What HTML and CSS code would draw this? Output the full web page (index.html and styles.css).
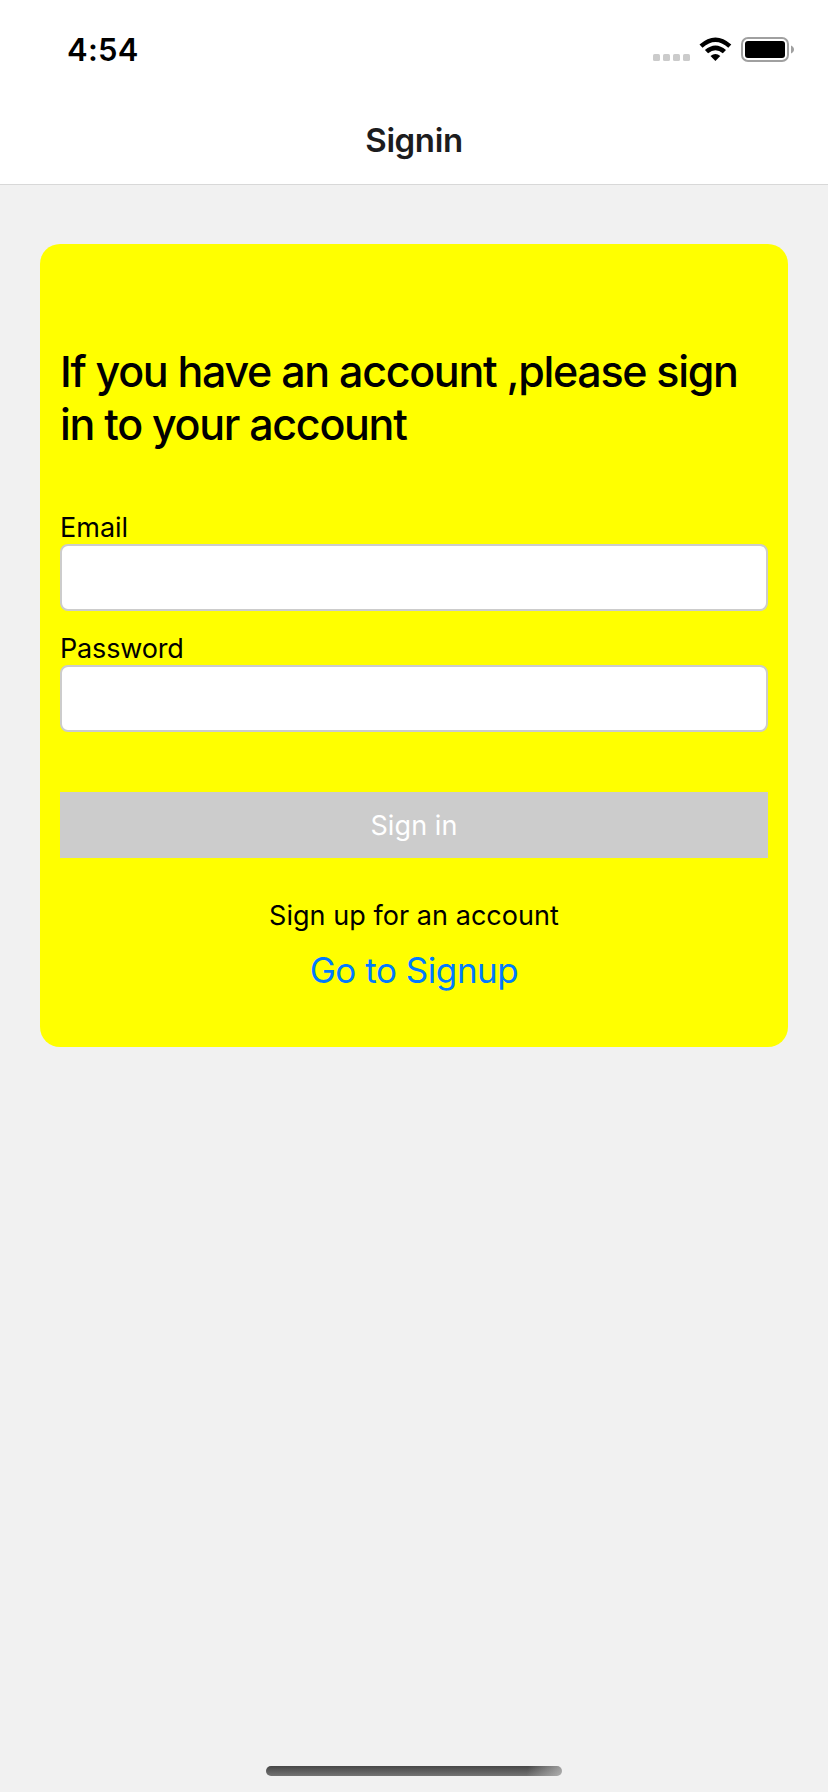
FILE: index.html
```html
<!DOCTYPE html>
<html lang="en">
<head>
<meta charset="utf-8">
<title>Signin</title>
<link rel="stylesheet" href="styles.css">
</head>
<body>
<div class="screen">
  <header class="header">
    <div class="status">
      <span class="time">4:54</span>
      <svg class="indicators" width="170" height="50" viewBox="0 0 170 50" aria-hidden="true">
        <g fill="#cbcbcb">
          <rect x="13" y="29" width="7" height="7" rx="1.6"/>
          <rect x="23" y="29" width="7" height="7" rx="1.6"/>
          <rect x="33" y="29" width="7" height="7" rx="1.6"/>
          <rect x="43" y="29" width="7" height="7" rx="1.6"/>
        </g>
        <path d="M59.500 19.600Q75.500 5.400 91.300 19.600L88.300 22.700Q75.500 11.400 62.500 22.700Z"/>
        <path d="M64.900 25.100Q75.500 16.100 86 25.100L82.800 28.300Q75.500 22.300 68.100 28.300Z"/>
        <path d="M70.500 31Q75.500 27 80.300 31L75.400 36Z"/>
        <rect x="102" y="13" width="46" height="23" rx="6" fill="none" stroke="#a0a0a0" stroke-width="2"/>
        <rect x="105" y="16" width="40" height="17" rx="3"/>
        <path d="M151 20.500C155 22 155 27 151 28.500Z" fill="#a0a0a0"/>
      </svg>
    </div>
    <h1 class="title">Signin</h1>
  </header>
  <main class="main">
    <form class="card">
      <h2 class="heading">If you have an account ,please sign<br>in to your account</h2>
      <label class="field"><span class="label">Email</span><input class="input" type="email"></label>
      <label class="field"><span class="label password">Password</span><input class="input" type="password"></label>
      <button class="button" type="button">Sign in</button>
      <p class="prompt">Sign up for an account</p>
      <a class="link">Go to Signup</a>
    </form>
  </main>
  <div class="home"></div>
</div>
</body>
</html>
```

FILE: styles.css
```css
* { box-sizing: border-box; }
body { margin: 0; font-family: Inter, "Liberation Sans", sans-serif; color: #000; }
.screen { width: 828px; height: 1792px; display: flex; flex-direction: column; align-items: center; background: #f1f1f1; }
.header { width: 100%; height: 185px; padding-top: 25px; background: #fff; border-bottom: 1px solid #d8d8d8; }
.status { height: 50px; padding: 0 18px 0 67px; display: flex; justify-content: space-between; align-items: center; }
.time { font-size: 31px; font-weight: 600; line-height: 50px; letter-spacing: 0.25px; }
.indicators { display: block; }
.title { margin: 45px 0 0; font-size: 33px; line-height: 40px; font-weight: 600; letter-spacing: -0.4px; text-align: center; color: #1c1c1e; }
.main { width: 100%; padding: 59px 40px 0; flex: 1; }
.card { height: 803px; padding: 101px 20px 0; border-radius: 20px; background: #ff0; }
.heading { margin: 0 0 60px; font-size: 43px; line-height: 53px; font-weight: 500; letter-spacing: -1.31px; white-space: nowrap; }
.field { display: block; margin-bottom: 20px; }
.label { display: block; height: 33px; font-size: 27px; line-height: 34px; }
.password { height: 34px; padding-top: 1px; letter-spacing: -0.15px; }
.input { display: block; width: 100%; height: 67px; padding: 0 20px; border: 2px solid #ccc; border-radius: 8px; background: #fff; font: inherit; }
.button { display: block; width: 100%; height: 66px; margin-top: 60px; padding: 0; border: 0; background: #ccc; color: #fff; font-family: inherit; font-size: 27px; letter-spacing: 0.1px; }
.prompt { margin: 41px 0 16px; font-size: 27px; line-height: 34px; letter-spacing: 0.05px; text-align: center; }
.link { display: block; font-size: 35px; line-height: 42px; letter-spacing: -0.45px; text-align: center; color: #007aff; }
.home { width: 296px; height: 10px; margin-bottom: 16px; border-radius: 5px; background: linear-gradient(100deg, transparent 88%, rgba(200, 200, 200, .7)), linear-gradient(#464646, #737373); }
```
